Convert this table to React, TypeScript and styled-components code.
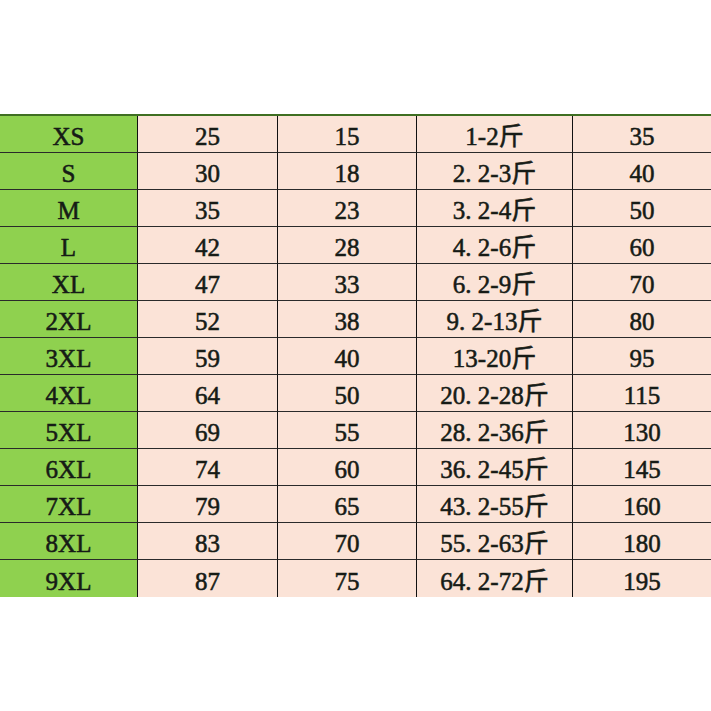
import React from "react";
import styled, { createGlobalStyle } from "styled-components";

const GlobalStyle = createGlobalStyle`
  html, body {
    margin: 0;
    padding: 0;
    background: #fff;
  }
`;

type Row = [string, string, string, string, string];

const rows: Row[] = [
  ["XS", "25", "15", "1-2斤", "35"],
  ["S", "30", "18", "2. 2-3斤", "40"],
  ["M", "35", "23", "3. 2-4斤", "50"],
  ["L", "42", "28", "4. 2-6斤", "60"],
  ["XL", "47", "33", "6. 2-9斤", "70"],
  ["2XL", "52", "38", "9. 2-13斤", "80"],
  ["3XL", "59", "40", "13-20斤", "95"],
  ["4XL", "64", "50", "20. 2-28斤", "115"],
  ["5XL", "69", "55", "28. 2-36斤", "130"],
  ["6XL", "74", "60", "36. 2-45斤", "145"],
  ["7XL", "79", "65", "43. 2-55斤", "160"],
  ["8XL", "83", "70", "55. 2-63斤", "180"],
  ["9XL", "87", "75", "64. 2-72斤", "195"],
];

const Page = styled.div`
  width: 711px;
  height: 711px;
  padding-top: 114px;
  box-sizing: border-box;
  background: #fff;
`;

const Table = styled.div`
  display: grid;
  grid-template-columns: 138px 140px 139px 156px 138px;
  border-top: 2px solid #3f6f22;
`;

const Cell = styled.div<{ $size?: boolean; $last?: boolean; $lastCol?: boolean }>`
  height: 37px;
  box-sizing: border-box;
  padding-top: 5px;
  display: flex;
  align-items: center;
  justify-content: center;
  background: ${(p) => (p.$size ? "#8fd14f" : "#fbe3d7")};
  border-bottom: ${(p) => (p.$last ? "none" : "1px solid #2a2a2a")};
  border-right: ${(p) => (p.$lastCol ? "none" : "1.5px solid #111")};
  font-family: "Liberation Serif", "Noto Sans CJK SC", serif;
  font-size: 25px;
  line-height: 1;
  font-weight: normal;
  -webkit-text-stroke: 0.55px #161b16;
  color: #161b16;
  white-space: pre;
`;

export default function App() {
  return (
    <>
      <GlobalStyle />
      <Page>
        <Table>
          {rows.map((row, i) =>
            row.map((text, j) => (
              <Cell
                key={`${i}-${j}`}
                $size={j === 0}
                $last={i === rows.length - 1}
                $lastCol={j === row.length - 1}
              >
                {text}
              </Cell>
            ))
          )}
        </Table>
      </Page>
    </>
  );
}
